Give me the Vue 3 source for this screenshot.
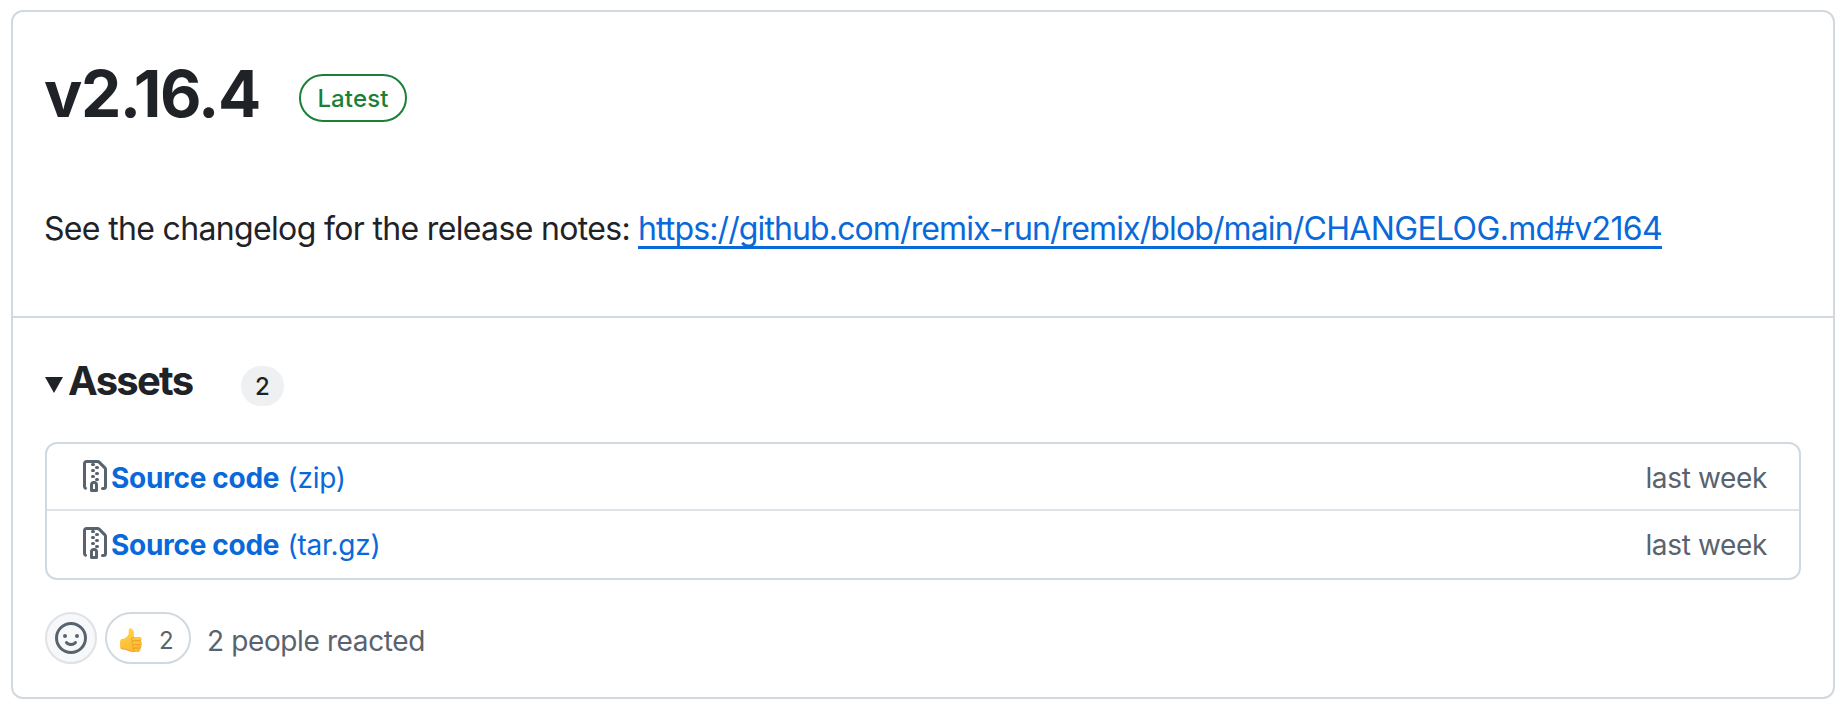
<script setup>
const assets = [
  { name: 'Source code', kind: '(zip)', date: 'last week', id: 'zip' },
  { name: 'Source code', kind: '(tar.gz)', date: 'last week', id: 'tar' },
]
</script>

<template>
  <main class="page">
    <article class="release">
      <section class="intro">
        <header class="heading">
          <h1 class="title">v2.16.4</h1>
          <span class="latest">Latest</span>
        </header>
        <p class="notes">
          <span class="notes-text">See the changelog for the release notes:</span>
          <a class="notes-link">https://github.com/remix-run/remix/blob/main/<span class="file">CHANGELOG.md#v2164</span></a>
        </p>
      </section>

      <section class="details">
        <div class="summary">
          <svg class="caret" viewBox="0 0 18 16"><path d="M0 0h18L9 16z" /></svg>
          <h2 class="assets-title">Assets</h2>
          <span class="counter">2</span>
        </div>

        <ul class="assets">
          <li v-for="a in assets" :key="a.id" class="asset">
            <svg class="zip-icon" viewBox="0 0 16 16">
              <path d="M3.5 1.75v11.5c0 .09.048.173.126.217a.75.75 0 0 1-.752 1.298A1.748 1.748 0 0 1 2 13.25V1.75C2 .784 2.784 0 3.75 0h5.586c.464 0 .909.185 1.237.513l2.914 2.914c.329.328.513.773.513 1.237v8.586A1.75 1.75 0 0 1 12.25 15h-.5a.75.75 0 0 1 0-1.5h.5a.25.25 0 0 0 .25-.25V4.664a.25.25 0 0 0-.073-.177L9.513 1.573a.25.25 0 0 0-.177-.073H7.25a.75.75 0 0 1 0 1.5h-.5a.75.75 0 0 1 0-1.5h-3a.25.25 0 0 0-.25.25Zm3.75 8.75h.5c.966 0 1.75.784 1.75 1.75v3a.75.75 0 0 1-.75.75h-2.5a.75.75 0 0 1-.75-.75v-3c0-.966.784-1.75 1.75-1.75ZM6 5.25a.75.75 0 0 1 .75-.75h.5a.75.75 0 0 1 0 1.5h-.5A.75.75 0 0 1 6 5.25Zm.75 2.25h.5a.75.75 0 0 1 0 1.5h-.5a.75.75 0 0 1 0-1.5ZM8 6.75A.75.75 0 0 1 8.75 6h.5a.75.75 0 0 1 0 1.5h-.5A.75.75 0 0 1 8 6.75ZM8.75 3h.5a.75.75 0 0 1 0 1.5h-.5a.75.75 0 0 1 0-1.5ZM8 9.75A.75.75 0 0 1 8.75 9h.5a.75.75 0 0 1 0 1.5h-.5A.75.75 0 0 1 8 9.75Zm-1 2.5v2.25h1v-2.25a.25.25 0 0 0-.25-.25h-.5a.25.25 0 0 0-.25.25Z" />
            </svg>
            <a class="asset-link"><strong class="asset-name">{{ a.name }}</strong><span class="asset-kind">{{ a.kind }}</span></a>
            <time class="date">{{ a.date }}</time>
          </li>
        </ul>

        <footer class="reactions">
          <button class="add-reaction" aria-label="Add a reaction">
            <svg class="smiley" viewBox="0 0 16 16">
              <path d="M8 0a8 8 0 1 1 0 16A8 8 0 0 1 8 0ZM1.5 8a6.5 6.5 0 1 0 13 0 6.5 6.5 0 0 0-13 0Zm3.82 1.636a.75.75 0 0 1 1.038.175l.007.009c.103.118.22.222.35.31.264.178.683.37 1.285.37.602 0 1.02-.192 1.285-.371.13-.088.247-.192.35-.31l.007-.008a.75.75 0 0 1 1.222.87c-.07.09-.13.17-.22.25-.16.166-.338.316-.53.445-.63.418-1.37.638-2.127.629-.946 0-1.652-.308-2.126-.63a3.331 3.331 0 0 1-.715-.657.75.75 0 0 1 .183-1.044ZM12 7a1 1 0 1 1-2 0 1 1 0 0 1 2 0ZM5 8a1 1 0 1 1 0-2 1 1 0 0 1 0 2Z" />
            </svg>
          </button>
          <button class="reaction">
            <svg class="thumb" viewBox="0 0 66 72">
              <defs>
                <linearGradient id="skin" x1="0" y1="0" x2="0.3" y2="1">
                  <stop offset="0" stop-color="#ffd54e" />
                  <stop offset="1" stop-color="#fdbb30" />
                </linearGradient>
              </defs>
              <path d="M26 8C26 1 31-1 35 2c6 4 8 14 6 25h18c7 0 8 9 3 11 5 3 5 10 1 12 3 3 2 9-2 10 2 4 0 9-5 10-8 2-20 2-28-1C20 67 16 64 8 64 2 64 0 58 0 48c0-9 1-15 6-15 10-1 18-7 20-15z" fill="url(#skin)" />
              <path d="M41 28c-7 0-9 7-3 11M62 38H40c-6 1-7 9-1 11M63 50H41c-6 1-6 8 0 10M61 60H42c-4 1-4 7 0 9" fill="none" stroke="#dc8f1c" stroke-width="2" stroke-linecap="round" />
              <path d="M2 60c5 5 12 3 20 6 10 6 23 7 35 4" fill="none" stroke="#e5941b" stroke-width="2" stroke-linecap="round" />
            </svg>
            <span class="reaction-count">2</span>
          </button>
          <span class="reacted">2 people reacted</span>
        </footer>
      </section>
    </article>
  </main>
</template>

<style>
body {
  background: #fff;
}
</style>

<style scoped>
.page {
  box-sizing: border-box;
  height: 710px;
  padding: 10px 9px 11px 11px;
  font-family: Inter, "Liberation Sans", sans-serif;
  color: #1f2328;
}
.release {
  box-sizing: border-box;
  height: 689px;
  border: 2px solid #d1d9e0;
  border-radius: 12px;
}
.intro {
  box-sizing: border-box;
  height: 306px;
  padding: 41px 32px 0;
  border-bottom: 2px solid #d1d9e0;
}
.heading {
  display: flex;
  height: 80px;
}
.title {
  margin: 0 0 0 -1px;
  width: 255px;
  font-size: 64px;
  line-height: 82px;
  font-weight: 650;
  letter-spacing: -1.5px;
  white-space: nowrap;
}
.latest {
  box-sizing: border-box;
  width: 108px;
  height: 48px;
  margin-top: 21px;
  border: 2px solid #1a7f37;
  border-radius: 24px;
  color: #1a7f37;
  font-size: 24px;
  line-height: 46px;
  font-weight: 500;
  letter-spacing: 0.15px;
  text-align: center;
}
.notes {
  display: flex;
  margin: 71px 0 0;
  font-size: 32px;
  line-height: 50px;
  white-space: nowrap;
}
.notes-text {
  width: 594px;
  margin-left: -1px;
  letter-spacing: -0.66px;
}
.notes-link {
  height: 42px;
  border-bottom: 3px solid #0969da;
  color: #0969da;
  letter-spacing: -0.88px;
}
.file {
  letter-spacing: -0.64px;
}
.details {
  padding: 38px 32px 0;
}
.summary {
  display: flex;
  height: 86px;
}
.caret {
  width: 18px;
  height: 16px;
  margin: 21px 5px 0 0;
  fill: #1f2328;
}
.assets-title {
  margin: 0;
  width: 173px;
  font-size: 40px;
  line-height: 50px;
  font-weight: 650;
  letter-spacing: -1.75px;
  white-space: nowrap;
}
.counter {
  width: 43px;
  height: 40px;
  margin-top: 10px;
  border-radius: 20px;
  background: #eff0f2;
  font-size: 24px;
  line-height: 41px;
  font-weight: 500;
  text-align: center;
}
.assets {
  box-sizing: border-box;
  width: 1756px;
  height: 138px;
  margin: 0;
  padding: 0;
  list-style: none;
  border: 2px solid #d1d9e0;
  border-radius: 12px;
}
.asset {
  display: flex;
  align-items: flex-start;
  height: 65px;
  padding: 0 32px;
  font-size: 28px;
  line-height: 69px;
  white-space: nowrap;
}
.asset + .asset {
  border-top: 2px solid #dee3e8;
}
.zip-icon {
  width: 32px;
  height: 32px;
  margin-top: 16px;
  fill: #59636e;
}
.asset-link {
  display: flex;
  color: #0969da;
}
.asset-name {
  width: 176.5px;
  font-weight: 650;
  letter-spacing: -0.3px;
}
.asset-kind {
  letter-spacing: -0.25px;
}
.date {
  margin-left: auto;
  color: #59636e;
  letter-spacing: -0.35px;
}
.reactions {
  display: flex;
  margin-top: 32px;
  color: #59636e;
}
.add-reaction,
.reaction {
  display: flex;
  box-sizing: border-box;
  height: 52px;
  padding: 0;
  border: 2px solid #d1d9e0;
  border-radius: 26px;
  background: #fff;
  font-family: inherit;
  color: inherit;
}
.add-reaction {
  width: 52px;
  margin-right: 8px;
  padding: 8px;
  border-color: #dee3e8;
  background: #f6f8fa;
}
.smiley {
  width: 32px;
  height: 32px;
  fill: #59636e;
}
.reaction {
  width: 86px;
  padding-left: 13px;
}
.thumb {
  width: 22px;
  height: 24px;
  margin: 14px 17px 0 0;
}
.reaction-count {
  margin-top: 2px;
  font-size: 24px;
  line-height: 49px;
}
.reacted {
  margin-left: 16px;
  font-size: 28px;
  line-height: 59px;
  letter-spacing: -0.38px;
  white-space: nowrap;
}
</style>
